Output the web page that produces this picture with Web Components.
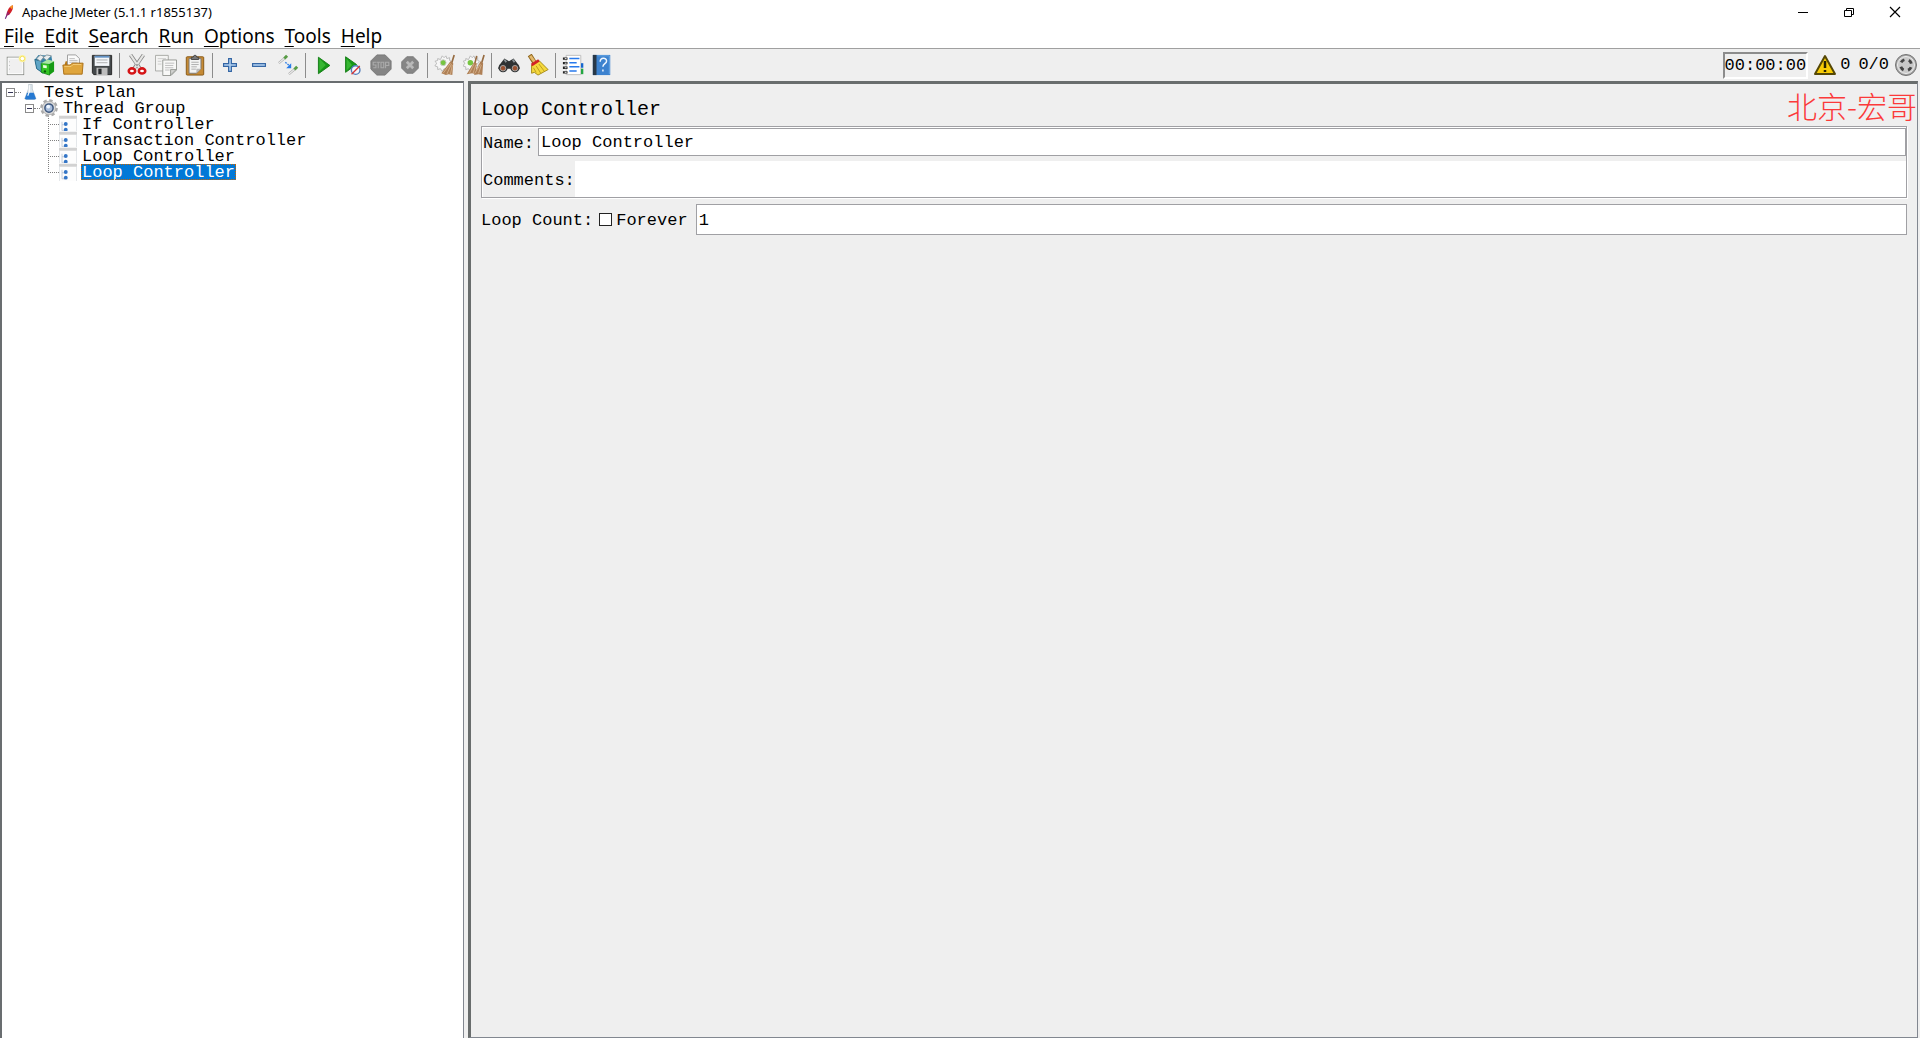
<!DOCTYPE html>
<html lang="en">
<head>
<meta charset="utf-8">
<title>Apache JMeter</title>
<style>
  html, body { margin: 0; height: 100%; }
  body { background: #efefef; color: #000; font-family: "Liberation Mono", "Noto Sans CJK SC", monospace; font-size: 17px; }
</style>
</head>
<body>
<jm-window></jm-window>
<script>
const icons = {
  feather: `<path d="M5 22L8 15" stroke="#6b1f7a" stroke-width="1.6"/><path d="M7 17C7 12 10 4 16 2c2 2-1 12-7 15z" fill="#d22128"/><path d="M12 5c1-2 3-3 4-3 1 1 0 4-1 6z" fill="#f79a23"/><path d="M7 17c0-3 0-4 1-6l4 4-3 2z" fill="#9e2064"/>`,
  new: `<rect x="3.5" y="3.5" width="18" height="19" fill="#f0f0f0" stroke="#888a85"/><rect x="4.5" y="4.5" width="16" height="17" fill="none" stroke="#fff"/><path d="M6 8v1M6 12v1M6 16v1" stroke="#bbb"/><circle cx="20" cy="5" r="4" fill="#fbf3a0"/><circle cx="20" cy="5" r="2.5" fill="#fff" stroke="#f3dd50"/>`,
  templates: `<path d="M2 6l4-5 14 1 1 6-9 13-8-5z" fill="#3481a8"/><path d="M2 6l8 2 1 13-7-5z" fill="#5fa5c6" stroke="#236685"/><path d="M4 5l4-4 4 2-4 5zM11 4l4-3 5 1-5 5z" fill="#e7edf0" stroke="#82949c"/><path d="M9 10l9 1v12l-9-3z" fill="#32c522" stroke="#178517"/><path d="M9 10l7-4 7 2-5 3z" fill="#a8e8a0"/><path d="M18 11l5-3v11l-5 4z" fill="#159b13"/><path d="M11 12l4 .5v3l-4-.5z" fill="#eaffde"/><circle cx="13" cy="19" r="1.3" fill="#065906"/>`,
  open: `<path d="M2 14l2-6h4l1 2h12l1 9z" fill="#b77a1b"/><path d="M6 1h9l4 4v13H6z" fill="#fafafa" stroke="#999"/><path d="M8 5h6M8 7h9M8 9h9" stroke="#bbb"/><path d="M1 12h8l2-2h12l-1 12H2z" fill="#dfa53c" stroke="#a96c13"/><path d="M2.5 13.5H10l2-2h9" fill="none" stroke="#f4ce7b"/>`,
  save: `<path d="M1.500 1.500h21v21H3l-1.500-2z" fill="#44484a" stroke="#222"/><rect x="4" y="2" width="16" height="11" fill="#f4f7fa"/><path d="M4 3h16" stroke="#6392c4" stroke-width="2"/><path d="M6 6.500h12M6 9.500h12" stroke="#aaa"/><rect x="6" y="15" width="12" height="8" fill="#bdbdbd"/><rect x="8" y="16" width="3.500" height="6" fill="#282b2d"/>`,
  cut: `<path d="M5 1L16 17M19 1L8 17" stroke="#888" stroke-width="4"/><path d="M5 1L15 16M19 1L9 16" stroke="#e6e6e4" stroke-width="2.2"/><circle cx="12" cy="12" r="1" fill="#888"/><ellipse cx="6.500" cy="18.500" rx="3.500" ry="2.800" fill="#fff" stroke="#d51517" stroke-width="2.800"/><ellipse cx="17.500" cy="18.500" rx="3.500" ry="2.800" fill="#fff" stroke="#d51517" stroke-width="2.800"/>`,
  copy: `<path d="M.5 1.500h14v17h-14z" fill="#f4f4f3" stroke="#a5a6a3"/><path d="M3 5h9M3 8h4M3 11h4" stroke="#ccc"/><path d="M8.500 6.500h15v11l-6 6h-9z" fill="#f8f8f7" stroke="#92948f"/><path d="M11 10h10M11 12.500h9M11 15h9M11 17.500h5" stroke="#bbb"/><path d="M17 23v-6h6z" fill="#d4d4d2" stroke="#92948f"/>`,
  paste: `<rect x="2.500" y="3" width="19" height="20" rx="1" fill="#c58a35" stroke="#835411"/><path d="M5.500 5h13v11l-5 5h-8z" fill="#f4f4f3" stroke="#777"/><path d="M8 9h8M8 11.500h8M8 14h6M8 16.500h5" stroke="#aaa"/><path d="M8 6V3.500h2l1-2h2l1 2h2V6z" fill="#777" stroke="#444"/><path d="M13.500 21v-5h5z" fill="#bbb"/>`,
  plus: `<path d="M10.5 5h3v5.500H19v3h-5.500V19h-3v-5.500H5v-3h5.500z" fill="#b1d0f0" stroke="#3465a4" stroke-width="1.3"/>`,
  minus: `<rect x="5" y="10.5" width="14" height="3" fill="#b1d0f0" stroke="#3465a4" stroke-width="1.3"/>`,
  toggle: `<path d="M2 10l7-6M13 22l7-6" stroke="#aaa" stroke-width="2.4"/><path d="M2 10l7-6M13 22l7-6" stroke="#f2f2f2" stroke-width="1.2"/><path d="M8 5l3-3M19 17l3-3" stroke="#579c45" stroke-width="3.2"/><path d="M9 9l5 4" stroke="#3c87e8" stroke-width="1.5" stroke-dasharray="2 1"/><path d="M15.500 10v5.500H10z" fill="#297ce7"/>`,
  play: `<path d="M7 3.500v18l12.500-9z" fill="#169618" stroke="#137d14"/><path d="M8 5v14l7-7z" fill="#37b633"/>`,
  playskip: `<path d="M5 3v17l12-8.500z" fill="#169618" stroke="#137d14"/><path d="M6 5v13l6-6z" fill="#37b633"/><circle cx="16" cy="17.500" r="4.700" fill="#f3f6fd" stroke="#527dbb" stroke-width="1.5"/><path d="M11.500 22l9-9" stroke="#d83535" stroke-width="1.5"/>`,
  stop: `<path d="M7.500 1h9l6.500 6.500v9L16.500 23h-9L1 16.500v-9z" fill="#858585" stroke="#777"/><g fill="none" stroke="#aaa" stroke-width="1.2"><path d="M6.500 9h-3v3h3v3h-3M7 9h4M9 9v6.500M12 9h3v6h-3zM17 15.500V9h3.500v3.500H17"/></g>`,
  shutdown: `<path d="M8.500 3h7L21 8.500v7L15.500 21h-7L3 15.500v-7z" fill="#868686" stroke="#777"/><path d="M8.500 8.500l7 7M15.500 8.500l-7 7" stroke="#b9b9b9" stroke-width="3"/>`,
  clear: `<path d="M9 2l2 2 2-2 1 3 3-1v3l2 1-2 2 1 3-3 1-1 3-3-1-2 3-2-3-3 1v-3l-3-1 2-3-2-2 3-1V5l3 1z" fill="#f6f6f6" stroke="#b7b7b7"/><circle cx="10" cy="9.500" r="3.2" fill="#76c541" stroke="#ccc"/><path d="M22 1l-3 10" stroke="#966b40" stroke-width="1.800"/><path d="M18 8l3 2-1 13-4-1-3 1-5-2z" fill="#af8056"/><path d="M18 10l-8 11M19 11l-5 11M20 12l-2 10" stroke="#d4b089"/>`,
  clearall: `<path d="M8 2l2 2 2-2 1 3 3-1v3l2 1-2 2 1 3-3 1-1 3-3-1-2 3-2-3-3 1v-3l-3-1 2-3-2-2 3-1V5l3 1z" fill="#f6f6f6" stroke="#b7b7b7"/><circle cx="8" cy="9.500" r="3" fill="#76c541"/><path d="M15 2l-2 8M23 1l-3 10" stroke="#966b40" stroke-width="1.800"/><path d="M12 9l3 1-1 12-4-1-6 1zM19 8l3 2-1 13-4-1-5 1z" fill="#af8056"/><path d="M12 11l-5 10M14 12l-3 9M19 11l-6 10M20 12l-3 9" stroke="#d4b089"/>`,
  find: `<path d="M3 10l4-5 5 3 5-3 4 5 3 6H0z" fill="#2f3233"/><circle cx="5.500" cy="15" r="5" fill="#303334"/><circle cx="18.500" cy="15" r="5" fill="#303334"/><circle cx="5.500" cy="15.500" r="3" fill="#9a5130" stroke="#aaa"/><circle cx="18.500" cy="15.500" r="3" fill="#9a5130" stroke="#aaa"/><path d="M7 6l2 3M16 6l2 3" stroke="#8b9295" stroke-width="2"/>`,
  broom: `<path d="M3 1l5 8" stroke="#8e651a" stroke-width="5"/><path d="M3.500 2l5 7" stroke="#e3b86c" stroke-width="3"/><path d="M5 12l8-5 10 10-11 6-4-3-3 1z" fill="#f5d93d" stroke="#a18611"/><path d="M10 13l5 8M13 11l6 8M7 15l3 5" stroke="#b9981b"/><path d="M5 12l8-5" stroke="#d32224" stroke-width="3"/>`,
  list: `<path d="M4.500 1.500h16v21h-16z" fill="#fff" stroke="#bbb"/><path d="M8 5h11M8 9.500h8M8 14h11M8 18.500h8" stroke="#287aec" stroke-width="1.7"/><path d="M1 5h5M1 10h5M1 15h5M1 20h5" stroke="#222" stroke-width="2.5"/><path d="M3 5h2M3 10h2M3 15h2M3 20h2" stroke="#fff"/><path d="M22 10v5" stroke="#1565ce" stroke-width="2.500"/><path d="M22 16v6" stroke="#23a641" stroke-width="2.500"/>`,
  help: `<path d="M2 1h19v22H2z" fill="#3c82cf"/><path d="M2 1h4v22H2z" fill="#283847"/><path d="M7 2h13v20" fill="none" stroke="#6ba8e6"/><path d="M10 8.500c0-5 7-5 7-1 0 3-4 3-4 6.500M13 17v2" fill="none" stroke="#eef6ff" stroke-width="1.6"/>`,
  warn: `<path d="M12 3L22 21H2z" fill="#f8cc05" stroke="#554806" stroke-width="2" stroke-linejoin="round"/><path d="M12 8v7M12 17v2" stroke="#282300" stroke-width="2.5"/>`,
  threads: `<circle cx="12" cy="12" r="10.5" fill="#a7a7a7" stroke="#737373"/><circle cx="12" cy="12" r="8.5" fill="#c9c9c9" stroke="#ededed"/><circle cx="12" cy="12" r="5.500" fill="none" stroke="#444" stroke-width="2.800" stroke-dasharray="4 4.639" stroke-dashoffset="-2.300"/>`,
  flask: `<path d="M10 2h5v6l5 13-2 1H7l-2-1 5-13z" fill="#dce5eb" stroke="#b8c3ca"/><path d="M8 13h9l3 8-2 1H7l-2-1z" fill="#2679d1"/><path d="M11 3v9l-2 5" stroke="#fff" stroke-width="1.5" fill="none"/>`,
  gear: `<circle cx="12" cy="12" r="10" fill="none" stroke="#aaa" stroke-width="3.5" stroke-dasharray="4.5 3.354"/><circle cx="12" cy="12" r="9" fill="#d8d8d8" stroke="#aaa"/><circle cx="12" cy="12" r="5.5" fill="#a9bedc" stroke="#3f587e" stroke-width="2"/><circle cx="11" cy="10" r="2.5" fill="#eff6ff"/>`,
  controller: `<path d="M0 0h24v24H0z" fill="#fdfdfd"/><path d="M0 1h24v4H0z" fill="#d2d2d2"/><path d="M.5 4v20M23.5 4v20" stroke="#d8dce2"/><path d="M4 9v12h4M4 13h4" fill="none" stroke="#b0bccd"/><circle cx="9" cy="12" r="2.6" fill="#3476c7"/><circle cx="9" cy="19.500" r="2.6" fill="#3476c7"/>`,
  minimise: `<path d="M7 12.5h10" stroke="#000"/>`,
  restore: `<path d="M7.5 10.5h7v6h-7zM9.5 10v-1.5h7v6H15" fill="none" stroke="#000"/>`,
  close: `<path d="M7 7l10 10M17 7L7 17" stroke="#000" stroke-width="1.2"/>`
};

function define(name, template) {
  customElements.define(name, class extends HTMLElement {
    connectedCallback() {
      if (this.shadowRoot) return;
      const root = this.attachShadow({ mode: "open" });
      root.innerHTML = typeof template === "function" ? template(this) : template;
    }
  });
}

define("jm-icon", el => `
  <style>:host{display:block;flex:none;width:var(--size,24px);height:var(--size,24px)}svg{display:block;width:100%;height:100%}</style>
  <svg viewBox="0 0 24 24" fill="none" aria-hidden="true">${icons[el.getAttribute("name")]}</svg>`);

define("jm-titlebar", `
  <style>
    :host{display:flex;align-items:center;height:24px;padding-right:2px;background:#fff;font:13px/20px "Noto Sans",sans-serif}
    .feather{--size:16px;margin:0 4px 0 2px} span{flex:1}
    button{width:46px;height:24px;padding:0 0 4px;border:0;background:none;display:grid;place-items:center}
  </style>
  <jm-icon class="feather" name="feather"></jm-icon><span>Apache JMeter (5.1.1 r1855137)</span>
  <button aria-label="Minimise"><jm-icon name="minimise"></jm-icon></button>
  <button aria-label="Restore"><jm-icon name="restore"></jm-icon></button>
  <button aria-label="Close"><jm-icon name="close"></jm-icon></button>`);

define("jm-menubar", `
  <style>
    :host{display:flex;gap:10px;height:24px;padding-left:4px;background:#fff;border-bottom:1px solid #a0a0a0}
    button{padding:0;border:0;background:none;font:19px/24px "Noto Sans",sans-serif;color:#000}
    u{text-underline-offset:3px;text-decoration-thickness:1px}
  </style>
  ${["File","Edit","Search","Run","Options","Tools","Help"].map(t => `<button><u>${t[0]}</u>${t.slice(1)}</button>`).join("")}`);

define("jm-toolbar", `
  <style>
    :host{display:flex;align-items:center;height:32px;background:#efefef;color:#000}
    button{width:29px;height:28px;padding:0;border:0;background:none;display:grid;place-items:center}
    button jm-icon{--size:22px}
    i{width:1px;height:25px;margin:0 2px 0 3px;background:#8c8c8c}
    .status{margin-left:auto;display:flex;align-items:center;padding-right:2px;font:17px/22px "Liberation Mono",monospace}
    time{padding:1px 0 0;border:2px solid;border-color:#8c8c8c #fff #fff #8c8c8c;margin-right:5px}
    .errors{display:flex;align-items:center;gap:3px;margin-right:8px}
    .status jm-icon{--size:24px} .total{margin-right:5px}
  </style>
  ${["new","templates","open","save","|","cut","copy","paste","|","plus","minus","toggle","|","play","playskip","stop","shutdown","|","clear","clearall","|","find","broom","|","list","help"]
    .map(n => n === "|" ? "<i></i>" : `<button aria-label="${n}"><jm-icon name="${n}"></jm-icon></button>`).join("")}
  <div class="status"><time>00:00:00</time><span class="errors"><jm-icon name="warn"></jm-icon>0</span><span class="total">0/0</span><jm-icon name="threads"></jm-icon></div>`);

define("jm-node", el => `
  <style>
    :host{display:block}
    .row{display:flex;align-items:center;height:16px}
    .box{flex:none;width:7px;height:7px;border:1px solid #8a8a8a;background:linear-gradient(#335,#335) center/5px 1px no-repeat #fff}
    .dash{flex:none;width:var(--dash,6px);border-top:1px dotted #808080}
    jm-icon{--size:18px}
    .label{box-sizing:border-box;height:16px;line-height:16px;padding:1px 1px 0;margin-left:4px;white-space:nowrap}
    :host([selected]) .label{background:#0078d7;color:#fff;outline:1px dotted #c86400;outline-offset:-1px}
    :host([leaf]){--dash:11px}
    .kids{margin-left:19px}
    :host([leaf]) .kids{display:none}
    :host([group]) .kids{margin-left:23px;background:repeating-linear-gradient(#808080 0 1px,transparent 1px 2px) 0 0/1px calc(100% - 7px) no-repeat}
  </style>
  <div class="row">${el.hasAttribute("leaf") ? "" : '<span class="box"></span>'}<span class="dash"></span><jm-icon name="${el.getAttribute("icon")}"></jm-icon><span class="label">${el.getAttribute("label")}</span></div>
  <div class="kids"><slot></slot></div>`);

define("jm-tree", `
  <style>
    :host{display:block;box-sizing:border-box;flex:none;width:464px;padding:1px 0 0 4px;background:#fff;border:2px solid #696d70;border-width:2px 1px 0 2px;border-right-color:#828790}
  </style>
  <jm-node icon="flask" label="Test Plan">
    <jm-node group icon="gear" label="Thread Group">
      <jm-node leaf icon="controller" label="If Controller"></jm-node>
      <jm-node leaf icon="controller" label="Transaction Controller"></jm-node>
      <jm-node leaf icon="controller" label="Loop Controller"></jm-node>
      <jm-node leaf selected icon="controller" label="Loop Controller"></jm-node>
    </jm-node>
  </jm-node>`);

define("jm-editor", `
  <style>
    :host{display:block;box-sizing:border-box;flex:1;min-width:0;padding:0 10px;background:#efefef;border:solid #696d6d;border-width:3px 1px 1px 3px;border-right-color:#828790;border-bottom-color:#828790}
    header{display:flex;align-items:center;height:42px;margin-right:-10px}
    h1{flex:1;margin:0;padding-top:10px;font:20px/24px "Liberation Mono",monospace}
    .mark{color:#fb3a3a;font:30px/40px "Noto Sans CJK SC",sans-serif;font-weight:300}
    .card{border:1px solid #a0a0a4;box-shadow:inset 1px 1px #fff,1px 1px #fff}
    .field{display:flex;align-items:center}
    input{font:inherit;color:#000;box-sizing:border-box}
    input[type=text]{flex:1;min-width:0;margin:0;background:#fff;border:1px solid #a0a0a4;padding:1px 2px 0;border-radius:0;outline:0}
    .field label{padding:2px 0 0 1px}
    .name{padding-top:1px;gap:4px} .name input{height:28px}
    .comments{padding:5px 0 0} .comments input[type=text]{height:36px;border:0}
    .count{margin-top:6px}.count label{padding:1px 0 0}.count input[type=text]{height:31px}
    .forever{display:flex;align-items:center;margin:0 8px 0 6px}
    input[type=checkbox]{appearance:none;width:13px;height:13px;margin:0 4px 0 0;border:1px solid #222;background:#fff}
  </style>
  <header><h1>Loop Controller</h1><span class="mark">北京-宏哥</span></header>
  <div class="card">
    <div class="field name"><label for="n">Name:</label><input id="n" type="text" value="Loop Controller"></div>
    <div class="field comments"><label for="c">Comments:</label><input id="c" type="text"></div>
  </div>
  <div class="field count"><label for="l">Loop Count:</label>
    <span class="forever"><input id="f" type="checkbox"><label for="f">Forever</label></span>
    <input id="l" type="text" value="1"></div>`);

define("jm-window", `
  <style>
    :host{display:flex;flex-direction:column;min-height:100vh}
    main{flex:1;display:flex;gap:4px;padding-right:2px}
  </style>
  <jm-titlebar></jm-titlebar><jm-menubar></jm-menubar><jm-toolbar></jm-toolbar>
  <main><jm-tree></jm-tree><jm-editor></jm-editor></main>`);
</script>
</body>
</html>
